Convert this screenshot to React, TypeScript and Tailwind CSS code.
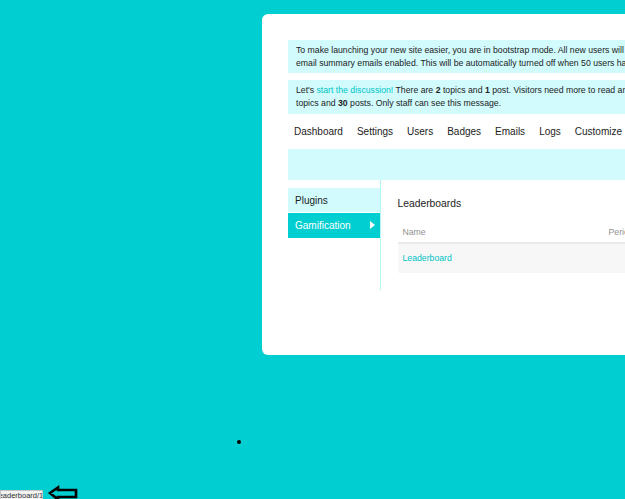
export default function App() {
  const navItems = ["Dashboard", "Settings", "Users", "Badges", "Emails", "Logs", "Customize", "API"];
  return (
    <div
      className="relative w-[625px] h-[499px] overflow-hidden bg-[#00ced1]"
      style={{ fontFamily: '"Liberation Sans", Arial, sans-serif' }}
    >
      <div className="ml-[262px] mt-[14px] w-[420px] h-[341px] bg-white rounded-[6px] p-[26px] pr-0 text-[#222]">
        <div className="bg-[#d1fbfd] px-[8px] py-[4px] text-[8.7px] leading-[12.7px] whitespace-nowrap overflow-hidden">
          <div>To make launching your new site easier, you are in bootstrap mode. All new users will be granted trust level 1 and have daily</div>
          <div>email summary emails enabled. This will be automatically turned off when 50 users have joined.</div>
        </div>
        <div className="mt-[7px] bg-[#d1fbfd] px-[8px] py-[4px] text-[8.7px] leading-[12.7px] whitespace-nowrap overflow-hidden">
          <div>
            Let's <span className="text-[#00c4c8]">start the discussion!</span> There are <b>2</b> topics and <b>1</b> post. Visitors need more to read and reply to – we recommend at least <b>5</b>
          </div>
          <div>
            topics and <b>30</b> posts. Only staff can see this message.
          </div>
        </div>
        <div className="flex items-center h-[35px] gap-[2px] text-[10px] text-[#222] whitespace-nowrap">
          {navItems.map((n) => (
            <span key={n} className="px-[6px]">{n}</span>
          ))}
        </div>
        <div className="h-[31px] bg-[#d1fbfd]" />
        <div className="flex">
          <div className="w-[93px] h-[110px] border-r border-[#b4f6f8] pt-[8px] shrink-0">
            <div className="h-[24px] bg-[#d1fbfd] flex items-center pl-[7px] pt-[1px] text-[10px]">Plugins</div>
            <div className="mt-[1px] h-[25px] bg-[#00ced1] flex items-center justify-between pl-[7px] pr-[5px] text-[10px] text-white">
              <span>Gamification</span>
              <span className="w-0 h-0 border-y-[4px] border-y-transparent border-l-[5px] border-l-white" />
            </div>
          </div>
          <div className="pl-[16.5px] pt-[17px] flex-1">
            <div className="text-[10.3px] leading-[14px] text-[#222]">Leaderboards</div>
            <div className="mt-[13px] h-[20px] flex items-center text-[8.7px] text-[#919191] border-b-2 border-[#e9e9e9] px-[5px]">
              <span className="w-[206px]">Name</span>
              <span>Period</span>
            </div>
            <div className="h-[29px] bg-[#f7f7f7] flex items-center px-[5px] text-[8.7px] text-[#00c4c8]">
              Leaderboard
            </div>
          </div>
        </div>
      </div>

      <div className="absolute left-[237px] top-[440px] w-[4px] h-[4px] rounded-full bg-black" />

      <div className="absolute left-0 top-[490px] w-[43px] h-[10px] bg-[#f2f2f2] border border-[#c4c4c4] overflow-hidden">
        <div className="ml-[-4px] text-[7.5px] leading-[9px] text-[#333] whitespace-nowrap">leaderboard/1</div>
      </div>

      <svg className="absolute left-[47px] top-[485px]" width="34" height="16" viewBox="0 0 34 16">
        <path
          d="M3 8 L11 2.5 L11 5 L29 5 L29 12 L11 12 L11 14.5 Z"
          fill="#00ced1"
          stroke="#000"
          strokeWidth="2.6"
          strokeLinejoin="miter"
        />
      </svg>
    </div>
  );
}
